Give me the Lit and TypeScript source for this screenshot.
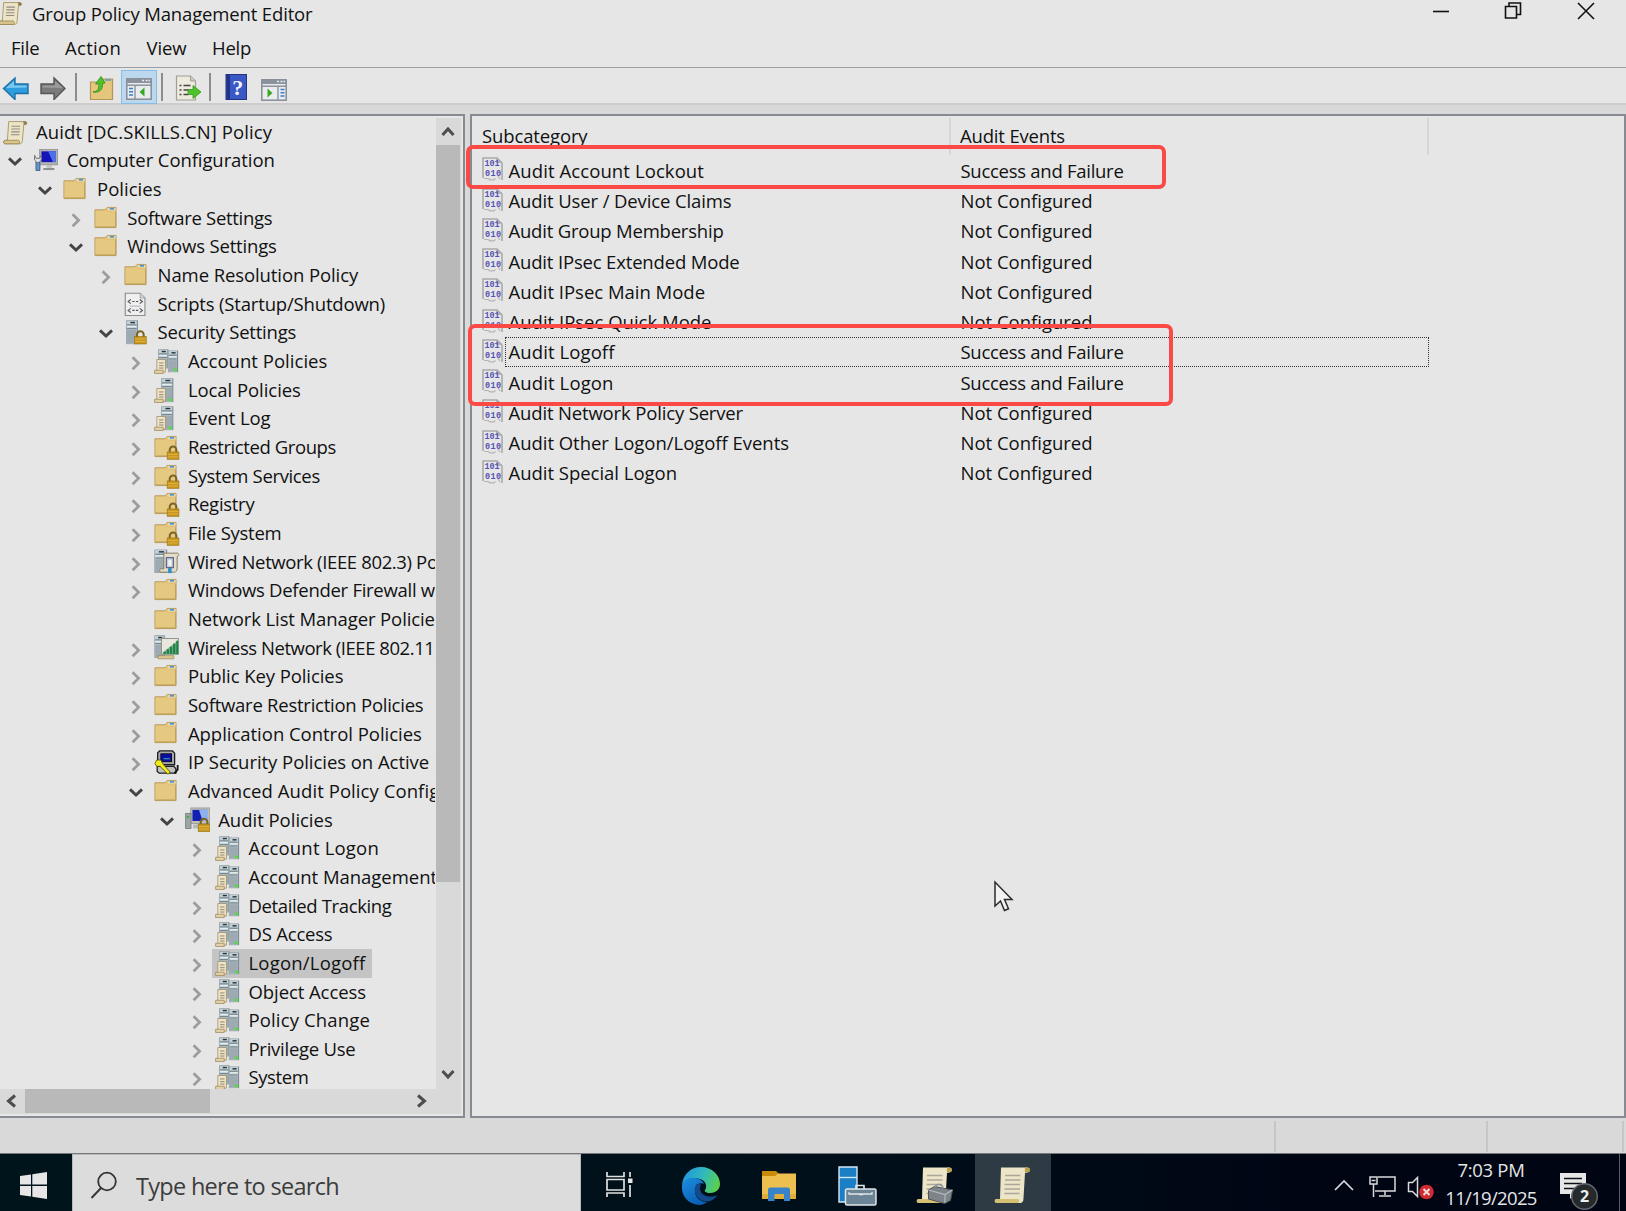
import { LitElement, html, svg, css, nothing } from "lit";
import { customElement } from "lit/decorators.js";
import { styleMap } from "lit/directives/style-map.js";

const FAMILY = '"Open Sans", "Noto Sans", sans-serif';
const pen = document.createElement("canvas").getContext("2d")!;

/** Letter spacing that makes `probe` (the leading part of a label) `width` px wide. */
function tracking(probe: string, width: number, size: number): string {
  pen.font = `${size}px ${FAMILY}`;
  return ((width - pen.measureText(probe).width) / probe.length).toFixed(3) + "px";
}
const label = (text: string, width: number, size = 18.5, probe = text) =>
  html`<span class="label" style=${styleMap({ letterSpacing: tracking(probe, width, size) })}>${text}</span>`;

/* ---------- small icons, drawn on a 16 unit grid ---------- */
const lock = (x: number, y: number) => svg`<g transform="translate(${x} ${y})">
  <path d="M1.9 4V2.4a2 2 0 0 1 4.2 0V4" fill="none" stroke="#7b6428" stroke-width="1.3"/>
  <rect x=".3" y="3.7" width="7.4" height="4.6" fill="#c8961c" stroke="#94700f" stroke-width=".4"/>
  <path d="M.6 5.2h6.8M.6 6.8h6.8" stroke="#e5bc4c" stroke-width=".5"/></g>`;
const folderShape = svg`
  <path d="M.6 2.4h6.3L8.3.9h5.6v12.7H.6z" fill="#e0c07a" stroke="#b79a58" stroke-width=".6"/>
  <rect x="8.6" y="1.2" width="5" height="1.7" fill="#ead9a8"/><rect x="10" y="1.2" width="2.6" height="1.1" fill="#4d93cf"/>
  <path d="M1 3h6.6l.9.9h5.1v9.2H1z" fill="#e6c981"/><path d="M1.1 13.2h12.6M13.6 4v9" stroke="#bd9d57" stroke-width=".6" fill="none"/>`;
const tower = (x: number, y: number, w: number, h: number) => svg`<g transform="translate(${x} ${y})">
  <rect width="${w}" height="${h}" fill="#7d8b93"/><rect x=".3" y=".3" width="${w - 1}" height="${h - .6}" fill="#c3d0d5"/>
  <path d="M${w * .35} 1.4h${w * .4}" stroke="#26343a" stroke-width=".9"/>
  <path d="M.5 2.9h${w - 1.4}M.5 5.3h${w - 1.4}" stroke="#5e6f78" stroke-width=".6"/>
  <path d="M.5 3.9h${w - 1.4}" stroke="#e3ecee" stroke-width=".8"/>
  <rect x=".4" y="6" width="${w - 1.2}" height="${h - 6.5}" fill="#9daab1"/></g>`;
const miniScroll = svg`
  <path d="M1.8 6.6h5.4v8H1.8z" fill="#f0e4c6" stroke="#a1906a" stroke-width=".5"/>
  <path d="M.4 13.4h5.4v2H.4z" fill="#e4d3a8" stroke="#9d8a5e" stroke-width=".5"/>
  <path d="M3.2 8.8h2.8M3.2 10.5h2.8M3.2 12h2.8" stroke="#8a8372" stroke-width=".6"/>`;
const parchment = svg`
  <path d="M3.6 1h10.6c1 0 1 1.9 0 1.9h-1.1L12.2 13c0 1.3-.6 2-1.6 2H1.4c-1.3 0-1.3-2.2 0-2.2h1.4z" fill="#ece4c5" stroke="#a99a6c" stroke-width=".6"/>
  <path d="M12.7.9h1.6c1 0 1 2 0 2h-1.2z" fill="#8e7c49"/>
  <path d="M1.2 12.8h8.6c.9.5.9 1.7.2 2.2H1.2c-1-.3-1-1.900 0-2.200z" fill="#d9c68c" stroke="#95834d" stroke-width=".5"/>
  <path d="M5.400 3.900h5.400M5.300 5.700h5.400M5.100 7.500h5.400M5 9.300h5.400" stroke="#8f8c85" stroke-width=".7"/>`;

const glyphs: Record<string, unknown> = {
  scroll: parchment,
  folder: folderShape,
  locked: svg`${folderShape}${lock(8, 7)}`,
  computer: svg`
    <rect x="4.200" y="1" width="11.400" height="9.600" fill="#b4b4b4" stroke="#8d8d8d" stroke-width=".5"/>
    <rect x="5.300" y="2.100" width="9.200" height="6.800" fill="#1414b8"/><path d="M9.500 2.100h5v6.800h-2z" fill="#4d6fe8"/>
    <path d="M8.500 10.700h3.400v1.800H8.500z" fill="#c4c4c4"/><path d="M6.500 12.600h7v1.300h-7z" fill="#8f8f8f"/>
    <path d="M1 4.600v3l1 .9v5.600h2.300V8.500l.9-.9v-3l-1.100 1.900H2z" fill="#dde3e6" stroke="#6a7075" stroke-width=".6"/>
    <rect x="1.900" y="9.200" width="2.400" height="5" fill="#5f96c9" stroke="#3d5a7d" stroke-width=".4"/>`,
  script: svg`
    <path d="M.8.800h9.400l3 3v11H.8z" fill="#efefef" stroke="#8b8b8b" stroke-width=".7"/><path d="M10.200.800v3h3" fill="#d5d5d5" stroke="#9a9a9a" stroke-width=".5"/>
    <path d="M4.300 4.700L2.600 6l1.700 1.300M9.900 4.700L11.600 6 9.900 7.300M5.200 6h1.500M7.500 6h1.500M4.300 10.300l-1.700 1.300 1.700 1.300M9.900 10.300l1.700 1.300-1.700 1.300M5.200 11.600h1.500M7.500 11.600h1.500" fill="none" stroke="#55555c" stroke-width=".7"/>
    <path d="M3.600 8.900h7" stroke="#a79cae" stroke-width=".5"/>`,
  security: svg`${tower(1.400, .2, 7.400, 15)}${lock(6.300, 6.800)}`,
  servers: svg`${tower(2.600, .2, 6.500, 12)}${tower(8.800, 1, 6.400, 13.600)}<rect x="12.600" y="12.400" width="2" height="1.600" fill="#4fe03a"/>${miniScroll}`,
  server: svg`${tower(4.500, .2, 7.700, 15)}<rect x="9.300" y="13" width="2.100" height="1.600" fill="#4fe03a"/>${miniScroll}`,
  wired: svg`${tower(.3, .4, 8, 14.600)}
    <path d="M6.200 2.600h8.600c1.200.2 1 2-.2 2.100V12c0 1.700-.7 2.600-1.800 2.600H4.600c-1.400 0-1.400-2 0-2.100h1.600z" fill="#e2dccb" stroke="#857a5c" stroke-width=".6"/>
    <path d="M7.800 5.500h4.400v6.200H7.800z" fill="#c9d0dd" stroke="#5e6a87" stroke-width=".8"/><rect x="9" y="7" width="2" height="3.500" fill="#f4f4f4"/><path d="M8.900 12h2.200v3.200H8.900z" fill="#2a91c4"/>`,
  wireless: svg`${tower(.3, .2, 6.500, 14.300)}
    <path d="M4.700 2.200h10.700v10H4.700z" fill="#e9e6dc" stroke="#8b8f88" stroke-width=".6"/><path d="M2.500 13h10v2h-10z" fill="#dac68f" stroke="#93804d" stroke-width=".4"/>
    <path d="M5.500 12.300V11L15.500 3v9.300z" fill="#7fb892"/><path d="M6 12V10.500h1.500V12zM8 12V9h1.500v3zM10 12V7.400h1.500V12zM12 12V5.500h1.500V12zM14 12V3.600h1.300V12z" fill="#24804a"/>`,
  ipsec: svg`
    <path d="M3.500.600h8.200l1.300 1.400v7.300H3.500L2.300 8V1.800z" fill="#a9a9a9" stroke="#1c1c1c" stroke-width=".8"/>
    <rect x="4.300" y="2.400" width="6.800" height="5" fill="#0c0ca8" stroke="#000" stroke-width=".5"/><path d="M6 5.500h4" stroke="#2ea8a0" stroke-width=".7"/>
    <path d="M2 10.300h10.500l1.300 1.500v2.800H3.300L2 13.500z" fill="#c2c2c2" stroke="#1c1c1c" stroke-width=".8"/><path d="M14.900 9.500v2.900l-2 2.300" stroke="#111" stroke-width="1.100" fill="none"/>
    <path d="M.6 8.500l1.100-2.200h2.700l1 2.200 4.800 5.500-1.400 1.300-5-5H1.700z" fill="#f3ea1c" stroke="#4c4a00" stroke-width=".5"/>`,
  audit: svg`
    <rect x="3.600" y=".6" width="12" height="9.800" fill="#c0c0bb" stroke="#96968f" stroke-width=".5"/><rect x="4.700" y="1.800" width="9.800" height="7" fill="#1220b4"/><path d="M8.800 1.800h5.700v7h-3.400z" fill="#8fb0ee"/>
    <rect x=".4" y="4" width="3.400" height="9.600" fill="#9ea5a5" stroke="#767c7c" stroke-width=".5"/><path d="M1.100 6.200h1.500" stroke="#2fb53a" stroke-width="1.200"/>
    <path d="M5 11h4v2.500H5z" fill="#b8b8b8"/>${lock(8, 7.100)}`,
};
const icon = (name: string) => html`<svg class="icon" viewBox="0 0 16 16">${glyphs[name]}</svg>`;

const chevron = (kind: "open" | "closed" | "") =>
  html`<svg class="chev" viewBox="0 0 18 18">${
    kind === "open" ? svg`<path d="M3 6.400l6 5.700 6-5.700" fill="none" stroke="#454545" stroke-width="2.900"/>`
    : kind === "closed" ? svg`<path d="M5.600 4.300l6 6-6 6" fill="none" stroke="#9c9c9c" stroke-width="2.700"/>` : nothing}</svg>`;

type Node = [level: number, state: "open" | "closed" | "", icon: string, text: string, width: number, probe?: string];
const TREE: Node[] = [
  [0, "", "scroll", "Auidt [DC.SKILLS.CN] Policy", 236],
  [1, "open", "computer", "Computer Configuration", 208],
  [2, "open", "folder", "Policies", 64.5],
  [3, "closed", "folder", "Software Settings", 145],
  [3, "open", "folder", "Windows Settings", 149.5],
  [4, "closed", "folder", "Name Resolution Policy", 200.5],
  [4, "", "script", "Scripts (Startup/Shutdown)", 227.5],
  [4, "open", "security", "Security Settings", 138.5],
  [5, "closed", "servers", "Account Policies", 139.5],
  [5, "closed", "server", "Local Policies", 113],
  [5, "closed", "server", "Event Log", 82.5],
  [5, "closed", "locked", "Restricted Groups", 148],
  [5, "closed", "locked", "System Services", 132],
  [5, "closed", "locked", "Registry", 66.5],
  [5, "closed", "locked", "File System", 93.5],
  [5, "closed", "wired", "Wired Network (IEEE 802.3) Policies", 239, "Wired Network (IEEE 802.3) P"],
  [5, "closed", "folder", "Windows Defender Firewall with Advanced Security", 247, "Windows Defender Firewall w"],
  [5, "", "folder", "Network List Manager Policies", 247, "Network List Manager Policie"],
  [5, "closed", "wireless", "Wireless Network (IEEE 802.11) Policies", 246.5, "Wireless Network (IEEE 802.11"],
  [5, "closed", "folder", "Public Key Policies", 155.5],
  [5, "closed", "folder", "Software Restriction Policies", 235.5],
  [5, "closed", "folder", "Application Control Policies", 234],
  [5, "closed", "ipsec", "IP Security Policies on Active Directory", 246, "IP Security Policies on Active "],
  [5, "open", "folder", "Advanced Audit Policy Configuration", 191, "Advanced Audit Policy"],
  [6, "open", "audit", "Audit Policies", 114.5],
  [7, "closed", "servers", "Account Logon", 130.5],
  [7, "closed", "servers", "Account Management", 182, "Account Managemen"],
  [7, "closed", "servers", "Detailed Tracking", 143],
  [7, "closed", "servers", "DS Access", 84],
  [7, "closed", "servers", "Logon/Logoff", 117],
  [7, "closed", "servers", "Object Access", 117.5],
  [7, "closed", "servers", "Policy Change", 121.5],
  [7, "closed", "servers", "Privilege Use", 107],
  [7, "closed", "servers", "System", 60],
];
const SELECTED = "Logon/Logoff";

const AUDITS: [text: string, width: number, on: boolean][] = [
  ["Audit Account Lockout", 195.5, true],
  ["Audit User / Device Claims", 223, false],
  ["Audit Group Membership", 215, false],
  ["Audit IPsec Extended Mode", 231, false],
  ["Audit IPsec Main Mode", 196.5, false],
  ["Audit IPsec Quick Mode", 203, false],
  ["Audit Logoff", 106, true],
  ["Audit Logon", 105, true],
  ["Audit Network Policy Server", 234.5, false],
  ["Audit Other Logon/Logoff Events", 280.5, false],
  ["Audit Special Logon", 168.5, false],
];

@customElement("policy-tree")
class PolicyTree extends LitElement {
  static styles = css`
    :host { display: block; height: 970.5px; overflow: hidden; }
    .row { display: flex; align-items: center; height: 28.66px; box-sizing: border-box; white-space: nowrap; }
    .chev { width: 18px; height: 18px; flex: none; margin: 1px 6px 0 6px; }
    .root .chev { display: none; }
    .item { display: flex; align-items: center; height: 100%; padding: 0 6.5px 0 3px; }
    .sel { background: #c4c4c4; }
    .icon { width: 25.4px; height: 25.4px; flex: none; margin-right: 8.3px; }
    .root .icon { margin-right: 8.1px; margin-left: -.5px; }
    .label { padding-bottom: 2px; }
  `;
  render() {
    return TREE.map(([level, state, ic, text, width, probe]) => html`
      <div class="row ${level ? "" : "root"}" style=${styleMap(level ? { paddingLeft: `${(level - 1) * 30.3}px` } : {})}>
        ${chevron(state)}
        <div class="item ${text === SELECTED ? "sel" : ""}">${icon(ic)}${label(text, width, 18.5, probe)}</div>
      </div>`);
  }
}

@customElement("audit-list")
class AuditList extends LitElement {
  static styles = css`
    :host { display: block; padding-top: 1.5px; }
    .head, .row { display: grid; white-space: nowrap; align-items: center; }
    .head { grid-template-columns: 479px 478px; height: 37.7px; }
    .head div { box-sizing: border-box; height: 100%; border-right: 2px solid #d6d6d6; padding: 5px 0 0 10px; }
    .head div + div { padding-left: 9px; }
    .row { grid-template-columns: 33px 890px; height: 30.28px; }
    .bits { width: 22px; height: 25px; margin-left: 10px; margin-top: -3px; }
    .cells { display: grid; grid-template-columns: 452px 1fr; align-items: center; height: 30px; box-sizing: border-box; width: 924px; padding-left: 3.5px; }
    .focus { outline: 1.6px dotted #333; outline-offset: -1.6px; }
    .bitText { font: 700 8.5px "Liberation Mono", monospace; fill: #5753b4; }
  `;
  render() {
    return html`
      <div class="head"><div>${label("Subcategory", 105.5)}</div><div>${label("Audit Events", 105)}</div></div>
      ${AUDITS.map(([text, width, on]) => html`
        <div class="row">
          <svg class="bits" viewBox="0 0 22 25">
            <path d="M1 22V2h14l5 5v17M15 2v4h5" fill="none" stroke="#aaa" stroke-width="1.600"/>
            <path d="M2 22.500h4l2 1.300h4l1.500-1.500M16 20l2 3" fill="none" stroke="#b4b4b4" stroke-width="1.200"/>
            <text class="bitText" x="2.500" y="10.300" textLength="15">101</text>
            <text class="bitText" x="3" y="19.600" textLength="16">010</text>
          </svg>
          <div class="cells ${text === "Audit Logoff" ? "focus" : ""}">
            ${label(text, width)}${on ? label("Success and Failure", 163) : label("Not Configured", 132)}
          </div>
        </div>`)}`;
  }
}

const paneIcon = (flip: boolean) => html`<svg class="pane" viewBox="0 0 26 22">
  <rect x=".8" y=".8" width="24.400" height="20.400" fill="#e9ecee" stroke="#868d96" stroke-width="1.500"/>
  <rect x="1" y="1" width="24" height="4" fill="#8a929d"/><path d="M16 2.500h2M19.500 2.500h2M22.500 2.500h1.500" stroke="#e8ecf0" stroke-width="1.400"/>
  <path d="M1 7.200h24" stroke="#868d96" stroke-width="1.400"/>
  ${flip
    ? svg`<path d="M17 8v13" stroke="#868d96" stroke-width="1.300"/><path d="M19.500 10.500h4M19.500 13.700h4M19.500 17h4" stroke="#3b7fc4" stroke-width="1.500"/><path d="M6.500 9.500v9l5-4.500z" fill="#3aa621"/>`
    : svg`<path d="M9 8v13" stroke="#868d96" stroke-width="1.300"/><path d="M3 10.500h4M3 13.700h4M3 17h4" stroke="#3b7fc4" stroke-width="1.500"/><path d="M18.500 9.500v9l-5-4.500z" fill="#3aa621"/>`}
</svg>`;

@customElement("task-bar")
class TaskBar extends LitElement {
  static styles = css`
    :host { display: flex; height: 57px; background: linear-gradient(90deg, #00141c, #00101a 50%, #000514 80%); color: #e6e6e6; box-shadow: 0 -1px 0 #75797c; }
    .start { width: 72px; display: flex; padding: 18px 0 0 20px; box-sizing: border-box; }
    .start svg { width: 27px; height: 27px; }
    .search { width: 509px; box-sizing: border-box; background: #dcdcdc; border: 1.5px solid #b9b9b9; border-bottom: 0; display: flex; padding-left: 17px; color: #3c3c3c; font-size: 23.5px; }
    .lens { width: 28px; height: 28px; margin: 16px 18px 0 0; }
    .search .label { margin-top: 15px; line-height: 32px; }
    .apps { display: flex; width: 470px; }
    .app { flex: none; display: flex; align-items: flex-start; justify-content: center; width: 76px; padding-top: 12px; box-sizing: border-box; }
    .app svg { width: 40px; height: 40px; }
    .app + .app { margin-left: 2px; }
    .app:first-child { margin-right: 3.5px; }
    .on { background: #2f3b44; }
    .tray { flex: 1; display: flex; }
    .caret { width: 22px; height: 14px; margin: 24px 0 0 282px; }
    .net { width: 28px; height: 25px; margin: 19.5px 0 0 14px; }
    .vol { width: 30px; height: 26px; margin: 19.5px 0 0 10px; }
    .clock { width: 104px; display: flex; flex-direction: column; align-items: center; font-size: 18.5px; line-height: 28px; margin-top: 2px; margin-left: 2px; }
    .note { width: 42px; height: 42px; margin: 16px 0 0 16px; flex: none; }
    .note text { font: 700 16px "Open Sans", sans-serif; fill: #eee; }
    .peek { margin-left: auto; width: 6px; border-left: 1.5px solid #5a5e66; flex: none; }
  `;
  render() {
    return html`
      <div class="start"><svg viewBox="0 0 27 27"><path d="M0 4l11-1.600V12.500H0zM12.300 2.200L27 0v12.500H12.300zM0 14h11v10.500L0 23zM12.300 14H27v13l-14.700-2.200z" fill="#e6e6e6"/></svg></div>
      <div class="search">
        <svg class="lens" viewBox="0 0 28 28"><circle cx="17" cy="10.500" r="8.800" fill="none" stroke="#333" stroke-width="1.800"/><path d="M11 17L1.500 27" stroke="#333" stroke-width="1.900"/></svg>
        ${label("Type here to search", 203, 23.5)}
      </div>
      <div class="apps">
        <div class="app"><svg viewBox="0 0 40 40" fill="none" stroke="#e0e0e0" stroke-width="1.700">
          <path d="M8 6v4.500h17V6M8 31v-4h17v4M8 13.500h17v10.500H8zM31 6v5M31 19v12"/><rect x="29" y="12.500" width="4.500" height="4.500" fill="#e6e6e6" stroke="none"/></svg></div>
        <div class="app"><svg viewBox="0 0 40 40">
          <defs>
            <linearGradient id="g1" x1="0" y1=".3" x2="1" y2=".6"><stop offset="0" stop-color="#2196dc"/><stop offset=".5" stop-color="#2fb8c0"/><stop offset="1" stop-color="#5bd14a"/></linearGradient>
            <linearGradient id="g2" x1="0" y1="0" x2=".6" y2="1"><stop offset="0" stop-color="#1d8fe0"/><stop offset="1" stop-color="#0a5fb4"/></linearGradient>
          </defs>
          <path d="M1 19C2 8 10 1 20 1c11 0 19 8 19 17 0 6-5 9-10 9-4 0-6-2-5-3 2-2 2-9-5-11-8-2-15 1-18 6z" fill="url(#g1)"/>
          <path d="M1 19c2-6 8-8 13-7 5 .8 8 3.500 9 6-3-2-9 0-9 7 0 7 6 11 12 11-2 2-5 3-8 3C7 38 0 30 1 19z" fill="url(#g2)"/>
          <path d="M15.500 18c-4 6-1 17 10.500 17.500 4 .3 8-3 10.500-6.500-7 3-15 1.500-17-4-1-3-.500-4 .5-6-1-1.500-3-1.500-4.500-1z" fill="#134a8c"/></svg></div>
        <div class="app"><svg viewBox="0 0 40 40">
          <path d="M3 5h14l3 3-2 3H3z" fill="#c98a06"/><path d="M3 10h13l3-2.500h18V33H3z" fill="#ecbf4f"/><path d="M3 28h34v5H3z" fill="#dfae38"/>
          <path d="M9 35V24c0-1.500 1-2.500 2.500-2.500h17c1.500 0 2.500 1 2.500 2.500v11h-6v-7h-9.500v7z" fill="#3884cb"/></svg></div>
        <div class="app"><svg viewBox="0 0 40 40">
          <path d="M2 1h18v35H2z" fill="#1b7fc6" stroke="#d5e6f3" stroke-width="1.400"/><path d="M2 11.500h18" stroke="#d5e6f3" stroke-width="1.400"/>
          <path d="M19 23v-3.500h8V23" fill="none" stroke="#e1e6e9" stroke-width="1.600"/><rect x="8.500" y="23" width="30.500" height="16" rx="1.500" fill="#6b8496" stroke="#dfe5e9" stroke-width="1.500"/>
          <path d="M12 26v2h23v-2M22 28.500h4" fill="none" stroke="#e1e6e9" stroke-width="1.300"/></svg></div>
        <div class="app"><svg viewBox="0 0 40 40">${this.parchment()}
          <path d="M13.500 24l6-3.500 18 3.500-2 10.500-6 3-16-4.500z" fill="#7e858a" stroke="#4d5256" stroke-width="1"/><path d="M13.500 24l16.500 4.500 7.500-4.500M30 28.500V37" fill="none" stroke="#b3babf" stroke-width="1.200"/><path d="M20 21c1-4 8-3 8 1.500" fill="none" stroke="#8d9499" stroke-width="1.500"/></svg></div>
        <div class="app on"><svg viewBox="0 0 40 40">${this.parchment()}</svg></div>
      </div>
      <div class="tray">
        <svg class="caret" viewBox="0 0 22 14"><path d="M2 12L11 3l9 9" fill="none" stroke="#d8d8d8" stroke-width="1.700"/></svg>
        <svg class="net" viewBox="0 0 28 25" fill="none" stroke="#dadada" stroke-width="1.500"><path d="M9 3h17v14H6M16 17v4M10 22h12M1 3h7v7H1zM4.500 10v13M2.500 6.500h4"/></svg>
        <svg class="vol" viewBox="0 0 30 26"><path d="M1.500 8.500h4l5-5v19l-5-5h-4z" fill="none" stroke="#dadada" stroke-width="1.500"/><circle cx="19.500" cy="18" r="7.300" fill="#d02a31"/><path d="M16.500 15l6 6M22.500 15l-6 6" stroke="#f2dada" stroke-width="2"/></svg>
        <div class="clock">${label("7:03 PM", 67)}${label("11/19/2025", 91.5)}</div>
        <svg class="note" viewBox="0 0 42 42"><path d="M1 3h26v21H15.500L11 29v-5H1z" fill="#e6e6e6"/><path d="M5 8.500h18M5 13.500h18M5 18.500h11" stroke="#0a1018" stroke-width="1.500"/>
          <circle cx="25.500" cy="26.500" r="12.800" fill="#26292c" stroke="#64686c" stroke-width="1.500"/><text x="25.500" y="32.300" text-anchor="middle">2</text></svg>
        <div class="peek"></div>
      </div>`;
  }
  parchment() {
    return svg`<path d="M8 1.500h26c3.500 0 4 4.500 0 5l-2 .5-1.500 25c0 3.500-1 5-4 5H4c-2.500 0-3-4 0-4h3z" fill="#ece5c8"/>
      <path d="M32 1.500h2.500c3.500 0 3.500 4.500 0 4.800h-2.700z" fill="#b8a14f"/><path d="M3.500 33h22c1 1 1 3 0 4h-22c-2.500-.5-2.500-3.500 0-4z" fill="#d4c174"/>
      <path d="M12 9.500h15.500M12 14h15.500M11.500 18.500H27M11.500 23H27M11.500 27.500h15" stroke="#aba79b" stroke-width="1.300"/>`;
  }
}

@customElement("app-root")
class AppRoot extends LitElement {
  static styles = css`
    :host { display: block; position: relative; width: 1626px; height: 1211px; overflow: hidden; background: #d9d9d9; color: #111; font: 18.5px "Open Sans", "Noto Sans", sans-serif; }
    .top { background: #e6e6e6; border-bottom: 2px solid #cccccc; box-sizing: border-box; height: 105px; }
    .title { display: flex; height: 28px; align-items: center; }
    .title .icon { width: 25px; height: 25px; margin: 0 9px 2px -2px; }
    .title .label { margin-bottom: 2px; }
    .buttons { margin-left: auto; display: flex; margin-right: 30px; margin-bottom: 8px; }
    .buttons svg { width: 20px; height: 20px; margin-left: 53px; fill: none; stroke: #111; stroke-width: 1.6; }
    .menu { display: flex; height: 40px; align-items: center; padding-left: 11px; gap: 25.5px; border-bottom: 1.5px solid #9b9fa3; box-sizing: border-box; }
    .tools { display: flex; align-items: flex-start; height: 35px; }
    .tools svg { flex: none; margin-top: 8px; }
    .arrow { width: 28px; height: 24px; }
    .back { margin-left: 2px; }
    .forward { margin-left: 9px; }
    .sep { width: 2px; height: 28px; background: #8c8c8c; margin: 5px 0 0 8px; }
    .big { width: 26px; height: 26px; }
    .tools .big { margin: 7px 0 0 12px; }
    .tools .help { margin: 6px 11px 0 13px; }
    .tools .pane { width: 26px; height: 22px; margin-top: 11px; }
    .active { box-sizing: border-box; width: 36px; height: 34px; margin: 2px 0 0 6px; background: #bbd8ee; border: 1.5px solid #86bde6; display: flex; justify-content: center; }
    .active + .sep { margin-left: 4px; }
    .tools .active .pane { margin-top: 7px; }
    .body { display: grid; grid-template-columns: 465px 1156px; gap: 5px; padding-top: 9px; }
    .left, .right { box-sizing: border-box; height: 1004px; border: 2px solid #868b93; background: #e6e6e6; }
    .left { border-left: 0; display: grid; grid-template-columns: 435px 25px; grid-template-rows: 971px 25px; padding-top: 2px; column-gap: 1px; }
    .vbar { background: #d9d9d9; display: flex; flex-direction: column; }
    .vbar svg, .hbar svg { width: 24px; height: 25px; flex: none; }
    .vthumb { flex: none; height: 737px; background: #b9b9b9; margin: 2px 1px 181px 0; }
    .hbar { grid-column: 1 / 3; background: #d9d9d9; display: flex; }
    .hthumb { width: 185px; height: 24px; margin: 0 200px 0 1px; background: #b9b9b9; }
    .status { height: 36px; display: grid; grid-template-columns: 1276px 212px 136px; padding-top: 1px; box-sizing: border-box; }
    .status div { border-right: 2px solid #c6c6c6; margin: 2px 0; }
    .mark { position: absolute; box-sizing: border-box; border: 4.500px solid #fb4a46; border-radius: 7px; }
    .m1 { left: 466px; top: 145px; width: 699.5px; height: 44px; }
    .m2 { left: 467.500px; top: 323.500px; width: 705px; height: 82px; }
    .cursor { position: absolute; left: 993px; top: 880px; width: 21px; height: 33px; }
  `;
  render() {
    return html`
      <div class="top">
        <div class="title">
          ${icon("scroll")}${label("Group Policy Management Editor", 280.5)}
          <div class="buttons">
            <svg viewBox="0 0 20 20"><path d="M3 11.500h16"/></svg>
            <svg viewBox="0 0 20 20"><path d="M2.500 6.500h11v11.500h-11zM6 6.500V3h11.500v11.500H13.500"/></svg>
            <svg viewBox="0 0 20 20"><path d="M2 3l16 16M18 3L2 19"/></svg>
          </div>
        </div>
        <div class="menu">${label("File", 28.5)}${label("Action", 56)}${label("View", 40)}${label("Help", 39)}</div>
        <div class="tools">
          <svg class="arrow back" viewBox="0 0 28 24"><path d="M1.500 12.500L13 2v6h13v9.500H13v6z" fill="#2d9ddd" stroke="#1e6fa8" stroke-width="1.400"/><path d="M4 12l8-7v4.500h12.500v2z" fill="#7cc8ef"/></svg>
          <svg class="arrow forward" viewBox="0 0 28 24"><path d="M26 12.500L15 2v6H2v9.500h13v6z" fill="#7b7b7b" stroke="#555" stroke-width="1.400"/><path d="M24 12L16 5v4.500H3.500v2z" fill="#9b9b9b"/></svg>
          <div class="sep"></div>
          <svg class="big" viewBox="0 0 26 26"><path d="M1.500 7h10l2.500-3h9.500v20.500h-22z" fill="#e4c67c" stroke="#b4945a" stroke-width="1.200"/><path d="M16 5h6" stroke="#5a9ad0" stroke-width="1.500"/><path d="M4 17c5 0 6-4 6-8H6.500L12 1.500 16 8l-2.500.500C14 14 11 18 4 17z" fill="#4dc32c" stroke="#2c8a17" stroke-width=".8"/></svg>
          <div class="active">${paneIcon(false)}</div>
          <div class="sep"></div>
          <svg class="big" viewBox="0 0 26 26"><path d="M1.500 1h14l5 5v19h-19z" fill="#eeeade" stroke="#a29e92" stroke-width="1.200"/><path d="M15.500 1v5h5" fill="#ccc" stroke="#a29e92"/><path d="M4.500 10.500h2M4.500 15h2M4.500 19.500h2M8.500 10.500h7M8.500 15h5M8.500 19.500h5" stroke="#444" stroke-width="1.500"/><path d="M13 14.500h5v-4l8 6.500-8 6.500v-4h-5z" fill="#4dc32c" stroke="#359a1c" stroke-width=".8"/></svg>
          <div class="sep"></div>
          <svg class="big help" viewBox="0 0 26 26"><rect x="2" y=".5" width="20.500" height="25" fill="#3a58c4" stroke="#24357e" stroke-width="1"/><path d="M2.500 1H6v24.500H2.500z" fill="#22338a"/><text x="13.800" y="20.500" text-anchor="middle" font-size="22" font-family="Liberation Serif" font-weight="700" fill="#f0f2fa">?</text></svg>
          ${paneIcon(true)}
        </div>
      </div>
      <div class="body">
        <div class="left">
          <policy-tree></policy-tree>
          <div class="vbar">
            <svg viewBox="0 0 24 25"><path d="M6.500 17l5.500-6 5.500 6" fill="none" stroke="#4d4d4d" stroke-width="3"/></svg>
            <div class="vthumb"></div>
            <svg viewBox="0 0 24 25"><path d="M6.500 8l5.500 6 5.500-6" fill="none" stroke="#4d4d4d" stroke-width="3"/></svg>
          </div>
          <div class="hbar">
            <svg viewBox="0 0 24 25"><path d="M15 6.500l-6.500 5.500L15 17.500" fill="none" stroke="#4d4d4d" stroke-width="3"/></svg>
            <div class="hthumb"></div>
            <svg viewBox="0 0 24 25"><path d="M8 6.500l6.500 5.500L8 17.500" fill="none" stroke="#4d4d4d" stroke-width="3"/></svg>
          </div>
        </div>
        <div class="right"><audit-list></audit-list></div>
      </div>
      <div class="status"><div></div><div></div><div></div></div>
      <task-bar></task-bar>
      <div class="mark m1"></div>
      <div class="mark m2"></div>
      <svg class="cursor" viewBox="0 0 21 33"><path d="M2 2v24l5.500-5 4 9.500 4-1.700-4-9.300H19z" fill="#f2f2f2" stroke="#2b2b2b" stroke-width="1.500"/></svg>`;
  }
}
